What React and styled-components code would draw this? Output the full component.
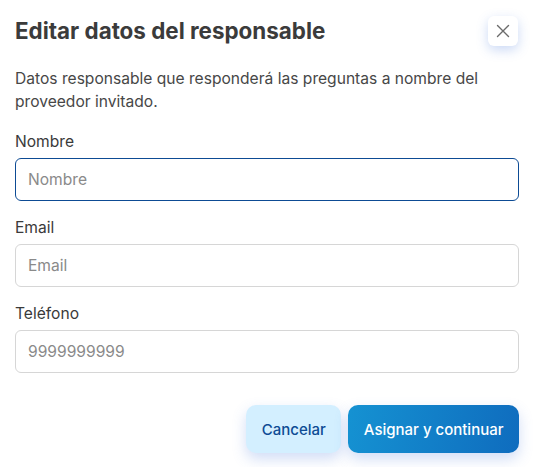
import React from "react";
import styled, { createGlobalStyle } from "styled-components";

const Global = createGlobalStyle`
  html, body { margin: 0; padding: 0; background: #fff; }
  body { font-family: Inter, "Noto Sans", sans-serif; -webkit-font-smoothing: antialiased; }
  * { box-sizing: border-box; }
`;

const Dialog = styled.div`
  width: 535px;
  padding: 16px 16px 14px 15px;
  display: flex;
  flex-direction: column;
`;

const Header = styled.div`
  display: flex;
  align-items: flex-start;
  justify-content: space-between;
`;

const Title = styled.h2`
  margin: 0;
  font-size: 22.4px;
  line-height: 30px;
  font-weight: 700;
  color: #3b3b3b;
`;

const CloseButton = styled.button`
  width: 30px;
  height: 30px;
  margin-right: 1px;
  border: none;
  border-radius: 6px;
  background: #fff;
  box-shadow: 0 4px 12px rgba(70, 120, 220, 0.28);
  display: flex;
  align-items: center;
  justify-content: center;
  padding: 0;
  color: #6b6b6b;
`;

const Description = styled.p`
  margin: 21px 0 0 0;
  font-size: 15.6px;
  line-height: 23px;
  color: #474747;
  max-width: 480px;
`;

const Field = styled.div`
  display: flex;
  flex-direction: column;
  margin-top: ${(p) => p.$mt}px;
`;

const Label = styled.label`
  font-size: 15.6px;
  line-height: 20px;
  color: #3a3a3a;
  margin-bottom: 6px;
`;

const Input = styled.input`
  height: 43px;
  width: 100%;
  border: 1px solid ${(p) => (p.$focused ? "#0d4b94" : "#d6d6d6")};
  border-radius: 6px;
  padding: 0 12px;
  font-family: inherit;
  font-size: 15.6px;
  color: #333;
  outline: none;
  background: #fff;
  &::placeholder { color: #8a8a8a; }
`;

const Actions = styled.div`
  display: flex;
  justify-content: flex-end;
  gap: 7px;
  margin-top: 32px;
`;

const Button = styled.button`
  height: 48px;
  border: none;
  border-radius: 10px;
  padding: 0 15.5px;
  font-family: inherit;
  font-size: 15px;
  font-weight: 500;
  cursor: pointer;
  box-shadow: 0 6px 14px rgba(70, 120, 220, 0.25);
  color: ${(p) => (p.$primary ? "#fff" : "#0d4b94")};
  background: ${(p) =>
    p.$primary ? "linear-gradient(100deg, #1592d2 0%, #0f6cbe 100%)" : "#d3efff"};
`;

export default function App() {
  return (
    <>
      <Global />
      <Dialog>
        <Header>
          <Title>Editar datos del responsable</Title>
          <CloseButton aria-label="Cerrar">
            <svg width="14" height="14" viewBox="0 0 14 14" fill="none" stroke="currentColor" strokeWidth="1.4" strokeLinecap="round">
              <path d="M1.5 1.5 L12.5 12.5 M12.5 1.5 L1.5 12.5" />
            </svg>
          </CloseButton>
        </Header>
        <Description>
          Datos responsable que responderá las preguntas a nombre del proveedor invitado.
        </Description>
        <Field $mt={19}>
          <Label>Nombre</Label>
          <Input $focused placeholder="Nombre" />
        </Field>
        <Field $mt={17}>
          <Label>Email</Label>
          <Input placeholder="Email" />
        </Field>
        <Field $mt={17}>
          <Label>Teléfono</Label>
          <Input placeholder="9999999999" />
        </Field>
        <Actions>
          <Button>Cancelar</Button>
          <Button $primary>Asignar y continuar</Button>
        </Actions>
      </Dialog>
    </>
  );
}
